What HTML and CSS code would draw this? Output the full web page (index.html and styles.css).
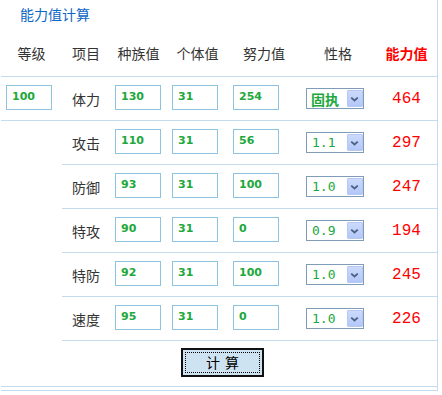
FILE: index.html
```html
<!DOCTYPE html>
<html lang="zh-CN">
<head>
    <meta charset="UTF-8">
    <title>能力值计算</title>
    <link rel="stylesheet" href="styles.css">
</head>
<body>
    <div class="calc">
        <h3 class="calc-title">能力值计算</h3>

        <!-- header -->
        <div class="row head">
            <div class="cell">等级</div>
            <div class="cell">项目</div>
            <div class="cell">种族值</div>
            <div class="cell">个体值</div>
            <div class="cell">努力值</div>
            <div class="cell">性格</div>
            <div class="cell total">能力值</div>
        </div>

        <div class="row first">
            <div class="cell field"><input class="num" type="text" value="100"></div>
            <div class="cell label">体力</div>
            <div class="cell field"><input class="num" type="text" value="130"></div>
            <div class="cell field"><input class="num" type="text" value="31"></div>
            <div class="cell field"><input class="num" type="text" value="254"></div>
            <div class="cell pick">
                <span class="nature">
                    <select class="bold"><option>固执</option></select>
                    <span class="arrow"><svg width="16" height="18" viewBox="0 0 16 18"><path d="M4.5 7.5 L8 10.5 L11.5 7.5" fill="none" stroke="#4d6185" stroke-width="2"/></svg></span>
                </span>
            </div>
            <div class="cell value">464</div>
        </div>

        <div class="row sub">
            <div class="cell blank"></div>
            <div class="cell label">攻击</div>
            <div class="cell field"><input class="num" type="text" value="110"></div>
            <div class="cell field"><input class="num" type="text" value="31"></div>
            <div class="cell field"><input class="num" type="text" value="56"></div>
            <div class="cell pick">
                <span class="nature">
                    <select><option>1.1</option></select>
                    <span class="arrow"><svg width="16" height="18" viewBox="0 0 16 18"><path d="M4.5 7.5 L8 10.5 L11.5 7.5" fill="none" stroke="#4d6185" stroke-width="2"/></svg></span>
                </span>
            </div>
            <div class="cell value">297</div>
        </div>

        <div class="row sub">
            <div class="cell blank"></div>
            <div class="cell label">防御</div>
            <div class="cell field"><input class="num" type="text" value="93"></div>
            <div class="cell field"><input class="num" type="text" value="31"></div>
            <div class="cell field"><input class="num" type="text" value="100"></div>
            <div class="cell pick">
                <span class="nature">
                    <select><option>1.0</option></select>
                    <span class="arrow"><svg width="16" height="18" viewBox="0 0 16 18"><path d="M4.5 7.5 L8 10.5 L11.5 7.5" fill="none" stroke="#4d6185" stroke-width="2"/></svg></span>
                </span>
            </div>
            <div class="cell value">247</div>
        </div>

        <div class="row sub">
            <div class="cell blank"></div>
            <div class="cell label">特攻</div>
            <div class="cell field"><input class="num" type="text" value="90"></div>
            <div class="cell field"><input class="num" type="text" value="31"></div>
            <div class="cell field"><input class="num" type="text" value="0"></div>
            <div class="cell pick">
                <span class="nature">
                    <select><option>0.9</option></select>
                    <span class="arrow"><svg width="16" height="18" viewBox="0 0 16 18"><path d="M4.5 7.5 L8 10.5 L11.5 7.5" fill="none" stroke="#4d6185" stroke-width="2"/></svg></span>
                </span>
            </div>
            <div class="cell value">194</div>
        </div>

        <div class="row sub">
            <div class="cell blank"></div>
            <div class="cell label">特防</div>
            <div class="cell field"><input class="num" type="text" value="92"></div>
            <div class="cell field"><input class="num" type="text" value="31"></div>
            <div class="cell field"><input class="num" type="text" value="100"></div>
            <div class="cell pick">
                <span class="nature">
                    <select><option>1.0</option></select>
                    <span class="arrow"><svg width="16" height="18" viewBox="0 0 16 18"><path d="M4.5 7.5 L8 10.5 L11.5 7.5" fill="none" stroke="#4d6185" stroke-width="2"/></svg></span>
                </span>
            </div>
            <div class="cell value">245</div>
        </div>

        <div class="row sub">
            <div class="cell blank"></div>
            <div class="cell label">速度</div>
            <div class="cell field"><input class="num" type="text" value="95"></div>
            <div class="cell field"><input class="num" type="text" value="31"></div>
            <div class="cell field"><input class="num" type="text" value="0"></div>
            <div class="cell pick">
                <span class="nature">
                    <select><option>1.0</option></select>
                    <span class="arrow"><svg width="16" height="18" viewBox="0 0 16 18"><path d="M4.5 7.5 L8 10.5 L11.5 7.5" fill="none" stroke="#4d6185" stroke-width="2"/></svg></span>
                </span>
            </div>
            <div class="cell value">226</div>
        </div>

        <div class="actions">
            <button class="calc-btn" type="button">计 算</button>
        </div>
    </div>
</body>
</html>
```

FILE: styles.css
```css
body {
    margin: 0;
    background: #fff;
    font-family: "Noto Sans CJK SC", sans-serif;
    font-size: 14px;
    color: #333;
}

.calc {
    width: 436px;
    margin-left: 1px;
    padding-bottom: 3px;
    border-right: 1px solid #c5dbeb;
    border-bottom: 1px solid #c5dbeb;
}

.calc-title {
    margin: 0;
    height: 30px;
    padding-left: 19px;
    line-height: 28px;
    font-size: 14px;
    font-weight: normal;
    color: #0b66c6;
}

.row {
    display: grid;
    grid-template-columns: 61px 48px 57px 61px 72px 76px 61px;
}

.cell {
    display: flex;
    align-items: center;
    justify-content: center;
    height: 43px;
}

.head {
    border-bottom: 1px solid #c5dbeb;
}

.head .cell {
    height: 46px;
}

.head .total {
    color: #f00;
    font-weight: bold;
}

.first {
    border-bottom: 1px solid #c5dbeb;
}

.sub .cell {
    border-bottom: 1px solid #c5dbeb;
}

.sub .blank {
    border-bottom: none;
}

.field {
    justify-content: flex-start;
    padding-left: 5px;
}

.num {
    box-sizing: border-box;
    width: 46px;
    height: 25px;
    margin: -2px 0 0;
    padding: 0 0 2px 5px;
    border: 1px solid #8fc4e0;
    font-family: "DejaVu Sans", sans-serif;
    font-size: 11px;
    font-weight: bold;
    color: #20a83c;
    outline: none;
}

.pick {
    justify-content: flex-start;
    padding-left: 6px;
}

.nature {
    box-sizing: border-box;
    display: inline-flex;
    align-items: center;
    width: 58px;
    height: 21px;
    border: 1px solid #7f9db9;
    background: #fff;
}

.nature select {
    appearance: none;
    -webkit-appearance: none;
    width: 40px;
    height: 19px;
    padding: 0 0 0 5px;
    margin: 0;
    border: none;
    background: transparent;
    font-family: "DejaVu Sans Mono", monospace;
    font-size: 13px;
    color: #20a83c;
    outline: none;
}

.nature select.bold {
    font-family: "Noto Sans CJK SC", sans-serif;
    font-size: 14px;
    font-weight: bold;
    padding-left: 4px;
}

.arrow {
    box-sizing: border-box;
    display: flex;
    width: 16px;
    height: 17px;
    border: 1px solid #b7c9f2;
    border-radius: 1px;
    background: linear-gradient(#cbdafd, #b3c7f7);
}

.arrow svg {
    margin: -1px 0 0 -1px;
}

.value {
    font-family: "Liberation Mono", monospace;
    font-size: 16px;
    color: #f00;
}

.actions {
    display: flex;
    justify-content: center;
    align-items: center;
    height: 45px;
    padding-left: 7px;
    border-bottom: 1px solid #c5dbeb;
}

.calc-btn {
    box-sizing: border-box;
    width: 83px;
    height: 29px;
    margin-top: -3px;
    border: 2px solid #111;
    background: #cde3f2;
    outline: 1px dotted #000;
    outline-offset: -5px;
    font-family: "Noto Sans CJK SC", sans-serif;
    font-size: 14px;
    word-spacing: 2px;
    color: #000;
    padding: 0;
}
```
